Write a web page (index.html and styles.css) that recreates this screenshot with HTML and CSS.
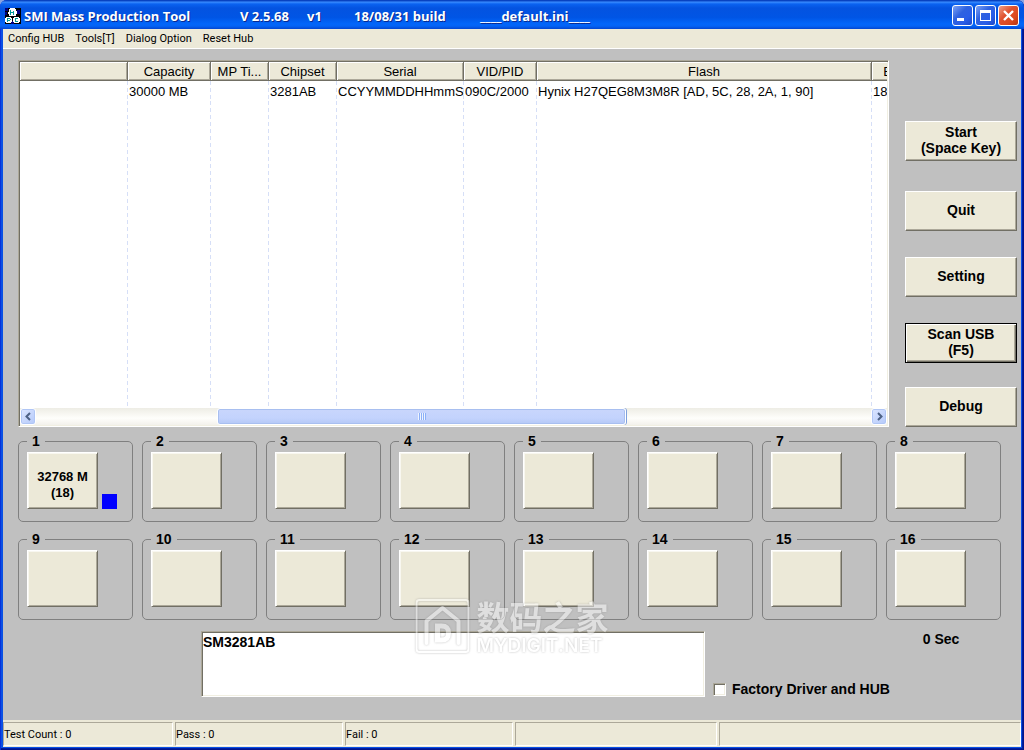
FILE: index.html
```html
<!DOCTYPE html>
<html lang="en">
	<head>
		<meta charset="UTF-8">
		<meta name="viewport" content="width=device-width, initial-scale=1.0">
		<title>SMI Mass Production Tool</title>
		<link rel="stylesheet" href="styles.css">
	</head>
	<body>
		<div class="window">
			<header class="title_bar">
				<svg class="app_icon" width="16" height="16" viewBox="0 0 16 16" shape-rendering="crispEdges">
					<rect width="16" height="16" fill="#000"/>
					<path d="M0 0h3v3H0zM0 4h2v3H0zM12 2h3v4h-3zM6 13h3v3H6z" fill="#000080"/>
					<path d="M5 0h5v1h1v2h1v3h-1v2H4V6H3V4h1V1h1zM1 9h5v1h1v4H6v1H1v-1H0v-4h1zM9 9h5v1h1v4h-1v1H9v-1H8v-4h1z" fill="#fff"/>
					<path d="M5 2h1v5H5zM8 3h1v4H8zM5 4h4v1H5zM2 10h1v4H2zM3 10h2v1H3zM5 11h1v1H5zM3 12h2v1H3zM10 10h3v1h-3zM10 11h1v2h-1zM10 13h3v1h-3z" fill="#009a9a"/>
				</svg>
				<h1 class="title">
					<span>SMI Mass Production Tool</span>
					<span>V 2.5.68</span>
					<span>v1</span>
					<span>18/08/31 build</span>
					<span>____default.ini____</span>
				</h1>
				<div class="win_btns">
					<button type="button" aria-label="Minimize">
						<svg width="19" height="19" viewBox="0 0 19 19"><path d="M4 12h7v3H4z" fill="#fff"/></svg>
					</button>
					<button type="button" aria-label="Maximize">
						<svg width="19" height="19" viewBox="0 0 19 19"><path d="M4 4h11v11H4zM5 7v7h9V7z" fill="#fff" fill-rule="evenodd"/></svg>
					</button>
					<button type="button" class="close" aria-label="Close">
						<svg width="19" height="19" viewBox="0 0 19 19"><path d="M5 5l9 9M14 5l-9 9" stroke="#fff" stroke-width="2.4"/></svg>
					</button>
				</div>
			</header>

			<nav class="menu">
				<a href="#">Config HUB</a>
				<a href="#">Tools[T]</a>
				<a href="#">Dialog Option</a>
				<a href="#">Reset Hub</a>
			</nav>

			<main class="content">
				<div class="top">
					<div class="list sunken">
						<div class="list_body">
							<table>
								<colgroup>
									<col class="w_port"><col class="w_cap"><col class="w_time"><col class="w_chip">
									<col class="w_serial"><col class="w_vid"><col class="w_flash"><col class="w_last">
								</colgroup>
								<thead>
									<tr>
										<th></th>
										<th>Capacity</th>
										<th>MP Ti...</th>
										<th>Chipset</th>
										<th>Serial</th>
										<th>VID/PID</th>
										<th>Flash</th>
										<th>E</th>
									</tr>
								</thead>
								<tbody>
									<tr>
										<td></td>
										<td>30000 MB</td>
										<td></td>
										<td>3281AB</td>
										<td>CCYYMMDDHHmmS</td>
										<td>090C/2000</td>
										<td>Hynix H27QEG8M3M8R [AD, 5C, 28, 2A, 1, 90]</td>
										<td>18</td>
									</tr>
									<tr class="blank">
										<td></td><td></td><td></td><td></td><td></td><td></td><td></td><td></td>
									</tr>
								</tbody>
							</table>
						</div>
						<div class="scroll">
							<button type="button" aria-label="Scroll left">
								<svg width="9" height="9" viewBox="0 0 9 9"><path d="M6 1L2.500 4.500 6 8" fill="none" stroke="#4d6185" stroke-width="2"/></svg>
							</button>
							<div class="track"><div class="thumb"></div></div>
							<button type="button" aria-label="Scroll right">
								<svg width="9" height="9" viewBox="0 0 9 9"><path d="M3 1l3.500 3.500L3 8" fill="none" stroke="#4d6185" stroke-width="2"/></svg>
							</button>
						</div>
					</div>
					<div class="side">
						<button type="button" class="btn">Start<br>(Space Key)</button>
						<button type="button" class="btn">Quit</button>
						<button type="button" class="btn">Setting</button>
						<button type="button" class="btn default">Scan USB<br>(F5)</button>
						<button type="button" class="btn">Debug</button>
					</div>
				</div>

				<div class="slots"></div>

				<div class="bottom">
					<textarea class="log sunken" aria-label="Log">SM3281AB</textarea>
					<div class="options">
						<div class="time">0 Sec</div>
						<label><input type="checkbox" class="sunken">Factory Driver and HUB</label>
					</div>
				</div>

				<div class="mark">
					<svg width="54" height="54" viewBox="0 0 54 54" fill="none" stroke="#fff">
						<rect x="1" y="1" width="52" height="52" rx="3" stroke-width="2"/>
						<path d="M11 44V22L27 9l16 13v22" stroke-width="4" stroke-linecap="round" stroke-linejoin="round"/>
						<path d="M22 27h4c5 0 7 2 7 7s-2 7-7 7h-4z" stroke-width="5"/>
					</svg>
					<div>
						<div class="mark_cn" lang="zh">数码之家</div>
						<div class="mark_en">MYDIGIT.NET</div>
					</div>
				</div>
			</main>

			<footer class="status">
				<div>Test Count : 0</div>
				<div>Pass : 0</div>
				<div>Fail : 0</div>
				<div></div>
				<div></div>
			</footer>
		</div>
		<script>
			// ports that have a drive in them
			var drives = {
				1: '32768 M<br>(18)'
			};
			var slots = document.querySelector('.slots');
			for (var i = 1; i <= 16; i++) {
				var slot = document.createElement('fieldset');
				slot.className = 'slot';
				var html = '<legend>' + i + '</legend>';
				html += '<button type="button" class="btn" aria-label="Port ' + i + '">' + (drives[i] || '') + '</button>';
				if (drives[i]) {
					html += '<span class="led"></span>';
				}
				slot.innerHTML = html;
				slots.appendChild(slot);
			}
		</script>
	</body>
</html>
```
FILE: styles.css
```css
* {
	margin: 0;
	padding: 0;
	box-sizing: border-box;
}

body {
	background: #8aa4e0;
	font-family: "Liberation Sans", Arial, sans-serif;
	color: #000;
}

button {
	font-family: inherit;
	color: inherit;
}

.window {
	display: flex;
	flex-direction: column;
	min-height: 100vh;
	background: #0a50e4;
	border-radius: 7px 7px 0 0;
	overflow: hidden;
	box-shadow: inset 1px 0 #0831d9, inset -1px -1px #00138c, inset -2px -2px #001ea0;
	padding: 0 3px 3px;
}

/* title bar */
.title_bar {
	display: flex;
	align-items: center;
	height: 29px;
	margin: 0 -3px;
	padding: 2px 5px 0;
	background: linear-gradient(#0842c0 0, #0842c0 3%, #3a8cff 7%, #0a62f0 14%, #0453e0 28%, #0055e5 60%, #0266fa 82%, #0463f5 90%, #0346d0 100%);
}

.title {
	flex: 1;
	display: grid;
	grid-template-columns: 216px 67px 47px 126px 1fr;
	margin-left: 3px;
	font: bold 13px/18px "Open Sans", "Noto Sans", sans-serif;
	color: #fff;
	text-shadow: 1px 1px #0a2a90;
	white-space: nowrap;
}

.win_btns {
	display: flex;
	gap: 2px;
}

.win_btns button {
	width: 21px;
	height: 21px;
	border: 1px solid #fff;
	border-radius: 3px;
	background: linear-gradient(135deg, #7da2f5, #2f62e0 40%, #2a5ee8 70%, #1c48c8);
}

.win_btns .close {
	background: linear-gradient(135deg, #f0a088, #e0522e 40%, #dc4a20 70%, #b83410);
}

.win_btns svg {
	display: block;
}

/* menu */
.menu {
	display: flex;
	gap: 11px;
	height: 20px;
	padding-left: 5px;
	background: #ece9d8;
	border-bottom: 1px solid #fff;
	font: 11px/19px Roboto, "Noto Sans", sans-serif;
}

.menu a {
	color: #000;
	text-decoration: none;
}

.content {
	position: relative;
	flex: 1;
	padding: 11px 20px 0 15px;
	background: #c0c0c0;
}

.top {
	display: flex;
	gap: 16px;
	margin-right: -16px;
}

/* two-tone inset edge */
.sunken {
	background: #fff;
	border: 1px solid;
	border-color: #aca899 #fff #fff #aca899;
	box-shadow: inset 1px 1px #716f64, inset -1px -1px #f1efe2;
}

/* device list */
.list {
	flex: 1;
	display: flex;
	flex-direction: column;
	min-width: 0;
	height: 367px;
	padding: 1px;
}

.list_body {
	flex: 1;
	overflow: hidden;
}

.list table {
	table-layout: fixed;
	width: 884px;
	height: 100%;
	border-collapse: separate;
	border-spacing: 0;
	font-size: 13px;
	line-height: 16px;
}

.w_port { width: 108px; }
.w_cap { width: 83px; }
.w_time { width: 58px; }
.w_chip { width: 68px; }
.w_serial { width: 127px; }
.w_vid { width: 73px; }
.w_flash { width: 335px; }
.w_last { width: 32px; }

.list th {
	height: 19px;
	padding-top: 1px;
	font-weight: normal;
	background: #ece9d8;
	border: 1px solid #716f64;
	border-width: 0 1px 1px 0;
	box-shadow: inset 1px 1px #fff, inset -1px -1px #aca899;
	white-space: nowrap;
	overflow: hidden;
}

.list td {
	height: 20px;
	padding: 2px 0 0 1px;
	white-space: nowrap;
	overflow: hidden;
	background: repeating-linear-gradient(#d6dff7 0, #d6dff7 4px, #fff 4px, #fff 7px) right top / 1px 100% no-repeat;
}

.list .blank td {
	height: auto;
}

/* scrollbar */
.scroll {
	display: flex;
	height: 17px;
	background: linear-gradient(#eeede5, #fefefb 60%, #f3f1ec);
}

.scroll button {
	display: flex;
	align-items: center;
	justify-content: center;
	width: 16px;
	border: 1px solid #fff;
	border-radius: 3px;
	background: linear-gradient(135deg, #dce6ff, #b4c9fa);
	box-shadow: inset 0 0 0 1px #b0c6f5;
}

.track {
	flex: 1;
}

.thumb {
	width: 49%;
	height: 17px;
	margin-left: 21.7%;
	border: 1px solid #fff;
	border-radius: 3px;
	background:
		repeating-linear-gradient(90deg, #eef4fe 0, #eef4fe 1px, #8cb0f8 1px, #8cb0f8 2px) center / 8px 7px no-repeat,
		linear-gradient(#c9d6fc, #c3d3fd 60%, #b4c8f6);
	box-shadow: inset 0 0 0 1px #a8bff0, 1px 0 #7fa0dc;
}

/* buttons */
.btn {
	border: 1px solid;
	border-color: #fff #716f64 #716f64 #fff;
	background: #ece9d8;
	box-shadow: inset -1px -1px #aca899;
	font-weight: bold;
	font-size: 14px;
	line-height: 16px;
}

.side {
	display: grid;
	grid-template-rows: 70px 66px 66px 64px 40px;
	width: 112px;
	padding-top: 61px;
}

.side .btn {
	height: 40px;
	padding-bottom: 2px;
}

.btn.default {
	border-color: #000;
	box-shadow: inset 1px 1px #fff, inset -1px -1px #716f64, inset -2px -2px #aca899;
}

/* ports */
.slots {
	display: grid;
	grid-template-columns: repeat(8, 1fr);
	gap: 9px;
	margin-top: 6px;
}

.slot {
	display: flex;
	align-items: flex-end;
	gap: 4px;
	min-width: 0;
	padding: 3px 8px 12px;
	border: 1px solid #808080;
	border-radius: 5px;
}

.slot legend {
	padding: 0 5px;
	font-weight: bold;
	font-size: 14px;
	line-height: 16px;
}

.slot .btn {
	width: 71px;
	height: 57px;
	padding-top: 8px;
	font-size: 13px;
	box-shadow: inset 1px 1px #f8f7f0, inset -1px -1px #aca899;
}

.led {
	width: 15px;
	height: 15px;
	background: #00f;
}

/* log and options */
.bottom {
	display: grid;
	grid-template-columns: 1fr 288px;
	gap: 8px;
	margin: 11px 0 0 183px;
	font-weight: bold;
	font-size: 14px;
	line-height: 16px;
}

.log {
	width: 100%;
	height: 66px;
	padding: 2px 1px;
	font: inherit;
	resize: none;
	outline: none;
}

.options {
	display: flex;
	flex-direction: column;
	justify-content: space-between;
}

.time {
	align-self: flex-end;
	width: 120px;
	text-align: center;
}

.options label {
	display: flex;
	align-items: center;
	gap: 6px;
}

.options input {
	appearance: none;
	width: 13px;
	height: 13px;
}

/* watermark over the page */
.mark {
	position: absolute;
	left: 50%;
	bottom: 62px;
	transform: translateX(-50%);
	display: flex;
	gap: 7px;
	color: #fff;
	opacity: .5;
	filter: drop-shadow(0 0 1px #888);
	white-space: nowrap;
	pointer-events: none;
}

.mark_cn {
	font: bold 33px/35px "Noto Sans CJK SC", sans-serif;
}

.mark_en {
	font: 600 19px/24px Inter, sans-serif;
}

/* status bar */
.status {
	display: grid;
	grid-template-columns: 170px 168px 168px 202px 1fr;
	gap: 2px;
	height: 27px;
	padding: 2px 0 1px;
	background: #ece9d8;
	font: 11px/24px Roboto, "Noto Sans", sans-serif;
}

.status div {
	height: 24px;
	border: 1px solid;
	border-color: #aca899 #fff #fff #aca899;
}
```
